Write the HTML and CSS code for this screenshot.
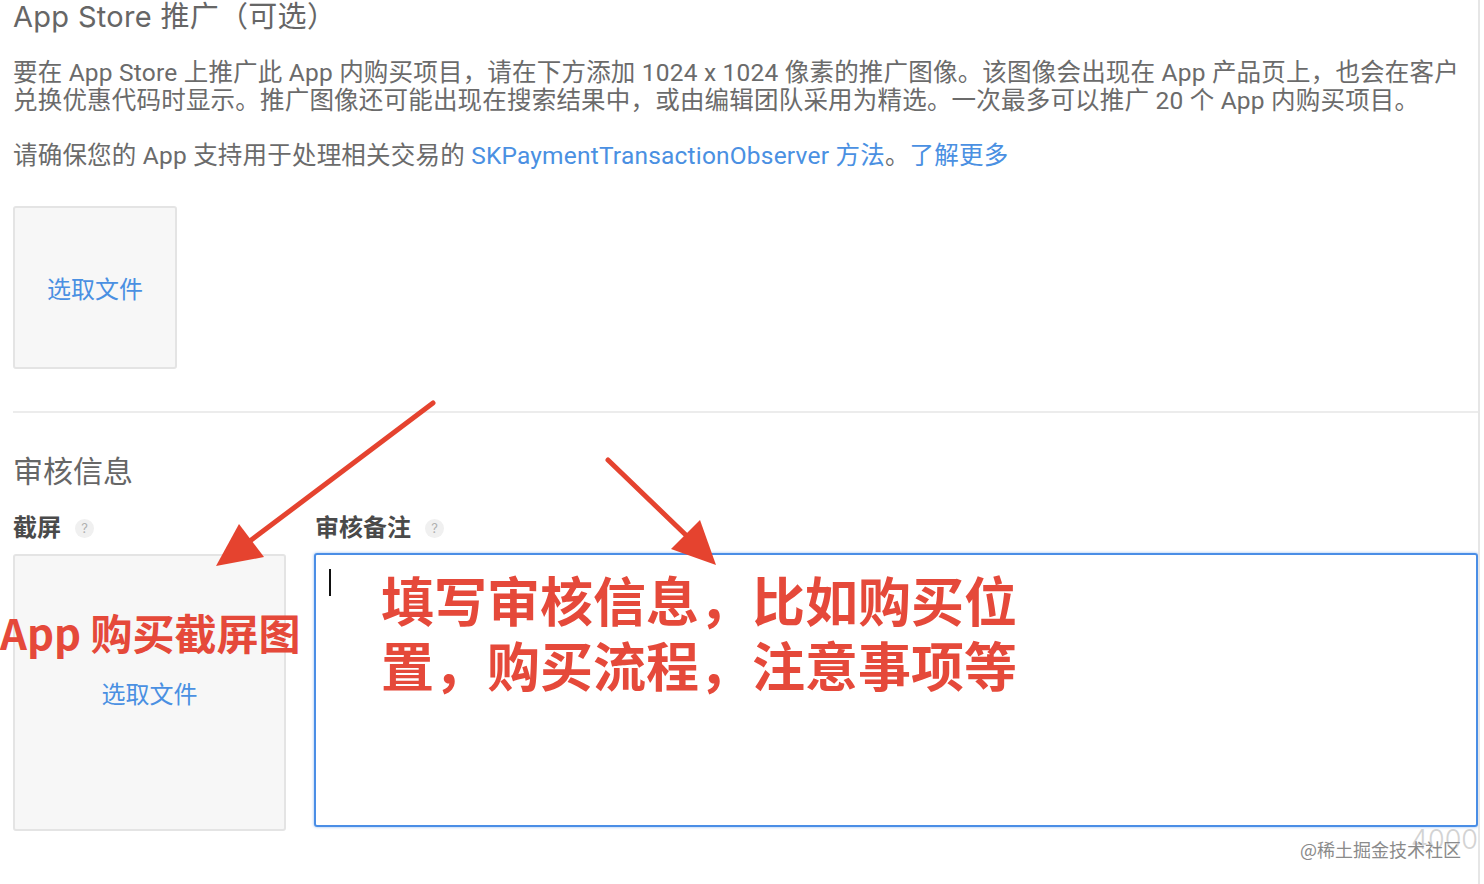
FILE: index.html
```html
<!DOCTYPE html>
<html lang="zh-CN">
<head>
<meta charset="utf-8">
<title>App Store 推广</title>
<link rel="stylesheet" href="styles.css">
</head>
<body>
<div class="page">
  <div class="content">
    <h1 class="title">App Store 推广（可选）</h1>
    <p class="desc">要在 App Store 上推广此 App 内购买项目，请在下方添加 1024 x 1024 像素的推广图像。该图像会出现在 App 产品页上，也会在客户<br>兑换优惠代码时显示。推广图像还可能出现在搜索结果中，或由编辑团队采用为精选。一次最多可以推广 20 个 App 内购买项目。</p>
    <p class="desc desc2">请确保您的 App 支持用于处理相关交易的 <a class="link">SKPaymentTransactionObserver 方法</a>。<a class="link">了解更多</a></p>
    <div class="file-box small"><span class="link">选取文件</span></div>
    <div class="divider"></div>
    <h2 class="section">审核信息</h2>
    <div class="review">
      <div class="col-left">
        <div class="label">截屏 <span class="help">?</span></div>
        <div class="file-box tall"><span class="link">选取文件</span></div>
      </div>
      <div class="col-right">
        <div class="label">审核备注 <span class="help">?</span></div>
        <div class="textarea"><span class="caret"></span></div>
        <div class="counter">4000</div>
      </div>
    </div>
  </div>

  <div class="note note-left">App 购买截屏图</div>
  <div class="note note-right">填写审核信息，比如购买位<br>置，购买流程，注意事项等</div>
  <svg class="arrows" width="1484" height="884" viewBox="0 0 1484 884">
    <line x1="433" y1="403" x2="246" y2="544" stroke="#e5432f" stroke-width="5" stroke-linecap="round"/>
    <polygon points="216,566 239,524 264,557" fill="#e5432f"/>
    <line x1="608" y1="460" x2="690" y2="539" stroke="#e5432f" stroke-width="5" stroke-linecap="round"/>
    <polygon points="716,565 671,549 700,520" fill="#e5432f"/>
  </svg>
  <div class="watermark">@稀土掘金技术社区</div>
</div>
</body>
</html>
```

FILE: styles.css
```css
html, body {
  margin: 0;
  padding: 0;
  background: #ffffff;
}
body {
  font-family: Inter, "Noto Sans CJK SC", "Noto Sans", sans-serif;
  color: #6a6a6a;
}
.page {
  position: relative;
  width: 1478px;
  min-height: 884px;
  border-right: 2px solid #e6e6e6;
  overflow: hidden;
}
.content {
  padding-left: 13px;
}
.title {
  margin: 0;
  font-size: 29px;
  line-height: 34px;
  font-weight: 400;
  letter-spacing: 0.3px;
  color: #666666;
}
.desc {
  margin: 25px 0 0;
  font-family: Roboto, "Noto Sans CJK SC", sans-serif;
  font-size: 24.5px;
  line-height: 28px;
  letter-spacing: 0.2px;
  white-space: nowrap;
  color: #6b6b6b;
}
.desc2 {
  margin-top: 27px;
}
.link {
  color: #4a90e2;
  text-decoration: none;
}
.file-box {
  box-sizing: border-box;
  background: #f7f7f7;
  border: 2px solid #e4e4e4;
  border-radius: 3px;
  display: flex;
  align-items: center;
  justify-content: center;
  font-size: 24px;
}
.file-box.small {
  margin-top: 36px;
  width: 164px;
  height: 163px;
}
.divider {
  margin-top: 42px;
  height: 2px;
  background: #ececec;
}
.section {
  margin: 41px 0 0;
  font-size: 30px;
  line-height: 34px;
  font-weight: 400;
  color: #666666;
}
.review {
  margin-top: 26px;
  display: grid;
  grid-template-columns: 273px 1fr;
  column-gap: 28px;
}
.label {
  display: flex;
  align-items: center;
  gap: 14px;
  font-size: 24px;
  line-height: 28px;
  font-weight: 700;
  color: #4a4a4a;
  height: 28px;
}
.col-right .label {
  padding-left: 1px;
}
.help {
  width: 19px;
  height: 19px;
  border-radius: 50%;
  background: #f0f0f0;
  color: #b0b0b0;
  font-size: 13px;
  line-height: 19px;
  font-weight: 400;
  text-align: center;
}
.file-box.tall {
  margin-top: 12px;
  width: 273px;
  height: 277px;
}
.textarea {
  box-sizing: border-box;
  margin-top: 11px;
  height: 274px;
  border: 2px solid #4a8ee6;
  border-radius: 3px;
  box-shadow: 0 0 3px rgba(74, 142, 230, 0.6);
  padding: 14px 0 0 13px;
}
.caret {
  display: block;
  width: 2px;
  height: 27px;
  background: #111111;
}
.counter {
  text-align: right;
  font-size: 27px;
  line-height: 30px;
  color: #d3d3d3;
  margin-top: -2px;
  font-weight: 300;
}
.note {
  position: absolute;
  color: #e5493a;
  font-family: "Noto Sans CJK SC", sans-serif;
  font-weight: 700;
  white-space: nowrap;
}
.note-left {
  left: 0;
  top: 605px;
  font-size: 42px;
  line-height: 54px;
}
.note-right {
  left: 381px;
  top: 567px;
  font-size: 53px;
  line-height: 65px;
}
.arrows {
  position: absolute;
  left: 0;
  top: 0;
  pointer-events: none;
}
.watermark {
  position: absolute;
  left: 1300px;
  top: 837px;
  font-size: 18px;
  line-height: 24px;
  color: #8a8a8a;
  font-family: "Noto Sans CJK SC", sans-serif;
}
```
